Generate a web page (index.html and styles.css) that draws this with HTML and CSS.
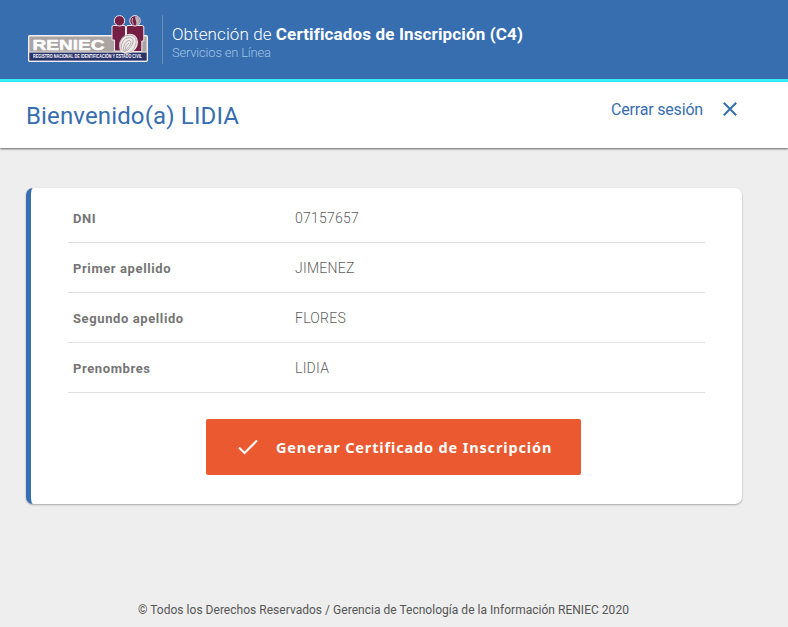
FILE: index.html
```html
<!DOCTYPE html>
<html lang="es">
<head>
<meta charset="utf-8">
<title>Certificados de Inscripción (C4)</title>
<link rel="stylesheet" href="styles.css">
</head>
<body>
<header class="top">
  <svg class="logo" width="120" height="49" viewBox="0 0 120 49" role="img" aria-label="RENIEC">
    <rect x=".7" y="20.700" width="118.600" height="25.500" rx="1" fill="#aaa4a2" stroke="#f3eff2" stroke-width="1.400"/>
    <rect x="1.400" y="37.500" width="117.200" height="8" fill="#28326b"/>
    <path d="M1.400 37h117.200" stroke="#e7e5e9" stroke-width=".8"/>
    <g fill="#741f43" stroke="#f1e9ed" stroke-width="1">
      <path d="M84 12q0-1.500 1.500-1.500h10.500q1.500 0 1.500 1.500V35H95v1h-8.500v-11H84z"/>
      <path d="M98.500 12q0-1.500 1.500-1.500h14q1.800 0 1.800 1.500v14h-2v10.500H98.500z"/>
      <circle cx="91.500" cy="5.800" r="5.200"/>
      <circle cx="107" cy="5.800" r="5.200"/>
    </g>
    <path d="M107 1.500q4 0 4.500 4t-3.500 5q1-2 0-4.600t-1-4.400z" fill="#bdb5b5"/>
    <path d="M104.500 3q-1 3 .8 6.500" fill="none" stroke="#bdb5b5"/>
    <ellipse cx="100.500" cy="28.800" rx="8.800" ry="10.600" transform="rotate(38 100.500 28.800)" fill="#eeeaea"/>
    <g fill="none" stroke="#a99b9e" stroke-width=".8">
      <path d="M91.500 33q-.5-13 11-13 8 2 5 10t-9 8"/>
      <path d="M93 35q0-12 8.500-12.500 6 1 2.500 7.500t-8.500 7"/>
      <path d="M95 36q1-10 6-10.500 4 1 0 6t-5 4.500M97 35q1-6 4-7"/>
    </g>
    <text class="logo-name" x="4.500" y="34.600" textLength="72" lengthAdjust="spacingAndGlyphs">RENIEC</text>
    <text class="logo-sub" x="5" y="43.400" textLength="109" lengthAdjust="spacingAndGlyphs">REGISTRO NACIONAL DE IDENTIFICACIÓN Y ESTADO CIVIL</text>
  </svg>
  <div class="titles">
    <h1 class="title">Obtención de <b>Certificados de Inscripción (C4)</b></h1>
    <p class="subtitle">Servicios en Línea</p>
  </div>
</header>
<nav class="bar">
  <h2 class="welcome">Bienvenido(a) LIDIA</h2>
  <a class="logout"><span class="logout-text">Cerrar sesión</span>
    <svg width="14" height="14" viewBox="0 0 14 14"><path d="M.8.8l12.400 12.400M13.200.8L.8 13.200" stroke="currentColor" stroke-width="2"/></svg>
  </a>
</nav>
<main class="card">
  <dl class="data">
    <div class="row"><dt>DNI</dt><dd>07157657</dd></div>
    <div class="row"><dt>Primer apellido</dt><dd>JIMENEZ</dd></div>
    <div class="row"><dt>Segundo apellido</dt><dd>FLORES</dd></div>
    <div class="row"><dt>Prenombres</dt><dd>LIDIA</dd></div>
  </dl>
  <button class="generate">
    <svg width="20" height="16" viewBox="0 0 20 16"><path d="M1 8.500l5.500 5.500L19 1.500" fill="none" stroke="#fff" stroke-width="2"/></svg>
    <span>Generar Certificado de Inscripción</span>
  </button>
</main>
<footer class="footer"><span>© Todos los Derechos Reservados / Gerencia de Tecnología de la Información RENIEC 2020</span></footer>
</body>
</html>
```
FILE: styles.css
```css
* { box-sizing: border-box; }
body {
  margin: 0;
  height: 627px;
  overflow: hidden;
  background: #eee;
  font-family: Roboto, "Liberation Sans", sans-serif;
}
h1, h2, p, dl, dd { margin: 0; font-weight: 400; }
.top {
  display: flex;
  height: 82px;
  padding: 15px 28px 0;
  background: #376eb0;
  border-bottom: 3px solid #35eef8;
}
.logo { display: block; flex: none; overflow: visible; }
.logo-name { font: bold 15.500px "Liberation Sans", sans-serif; fill: #fff; stroke: #fff; stroke-width: .5px; }
.logo-sub { font: bold 4.800px "Liberation Sans", sans-serif; fill: #fff; }
.titles {
  height: 49px;
  margin-left: 14px;
  padding: 9px 0 0 9px;
  border-left: 1px solid #6e8bae;
  white-space: nowrap;
}
.title { color: #fff; font-size: 17px; line-height: 20px; font-weight: 300; letter-spacing: .1px; }
.title b { font-weight: 700; letter-spacing: .14px; }
.subtitle { color: #9fc5e3; font-size: 13px; line-height: 17px; font-weight: 300; letter-spacing: -.2px; }
.bar {
  display: flex;
  justify-content: space-between;
  height: 66px;
  padding: 0 51px 0 26px;
  background: #fff;
  color: #376eb0;
  box-shadow: 0 1px 2px rgba(0, 0, 0, .6);
}
.welcome { padding-top: 18px; font-size: 24px; line-height: 32px; letter-spacing: .14px; }
.logout { display: flex; align-items: center; gap: 20px; height: 54px; font-size: 16px; letter-spacing: -.18px; }
.card {
  width: 716px;
  height: 316px;
  margin: 40px 0 0 26px;
  padding: 5px 37px 0;
  background: #fff;
  border-left: 5px solid #376eb0;
  border-radius: 7px;
  box-shadow: 0 1px 2px rgba(0, 0, 0, .3);
}
.row {
  display: flex;
  align-items: center;
  height: 50px;
  width: 637px;
  padding: 1px 0 0 5px;
  border-bottom: 1px solid #e0e0e0;
  color: #757575;
  font-size: 14px;
}
.row dt { width: 222px; font-size: 13px; font-weight: 700; letter-spacing: .6px; }
.row dd { font-weight: 300; letter-spacing: .25px; color: #606060; }
.generate {
  display: flex;
  align-items: center;
  gap: 18px;
  width: 375px;
  height: 56px;
  margin: 26px 0 0 138px;
  padding: 0 0 0 32px;
  border: 0;
  border-radius: 2px;
  background: #eb5931;
  color: #fff;
  font: 700 14.500px "Noto Sans", "Open Sans", sans-serif;
  letter-spacing: .85px;
  white-space: nowrap;
}
.footer { margin: 97px 0 0 138px; color: #555; font-size: 12px; line-height: 18px; letter-spacing: .025px; white-space: nowrap; }
```
